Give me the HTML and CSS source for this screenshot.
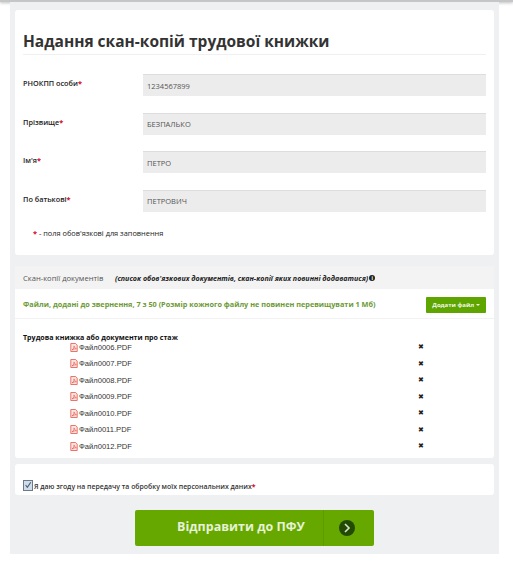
FILE: index.html
```html
<!DOCTYPE html>
<html lang="uk">
<head>
    <meta charset="UTF-8">
    <meta name="viewport" content="width=device-width, initial-scale=1.0">
    <title>Надання скан-копій трудової книжки</title>
    <link rel="stylesheet" href="styles.css">
</head>
<body>
    <div class="topbar"></div>

    <div class="wrapper">
        <!-- Personal data -->
        <div class="card">
            <h1>Надання скан-копій трудової книжки</h1>
            <div class="row">
                <label>РНОКПП особи<span class="req">*</span></label>
                <input type="text" value="1234567899" disabled>
            </div>
            <div class="row">
                <label>Прізвище<span class="req">*</span></label>
                <input type="text" value="БЕЗПАЛЬКО" disabled>
            </div>
            <div class="row">
                <label>Ім'я<span class="req">*</span></label>
                <input type="text" value="ПЕТРО" disabled>
            </div>
            <div class="row">
                <label>По батькові<span class="req">*</span></label>
                <input type="text" value="ПЕТРОВИЧ" disabled>
            </div>
            <p class="note"><span class="req">*</span> - поля обов'язкові для заповнення</p>
        </div>

        <!-- Documents -->
        <div class="docs">
            <div class="docs-head">
                <span class="docs-title">Скан-копії документів</span>
                <em class="docs-hint">(список обов'язкових документів, скан-копії яких повинні додаватися)</em>
                <span class="info">i</span>
            </div>
            <div class="docs-bar">
                <span class="docs-count">Файли, додані до звернення, 7 з 50 (Розмір кожного файлу не повинен перевищувати 1 Мб)</span>
                <button class="add-btn">Додати файл <span class="caret"></span></button>
            </div>
            <div class="docs-list">
                <div class="group-title">Трудова книжка або документи про стаж</div>
                <div class="file"><span class="file-name"><svg class="pdf" viewBox="0 0 10 11"><path d="M1 .5h6l2 2v8H1z" fill="#fbe3e0" stroke="#e2574c"/><path d="M2.500 8.500c2-1 3-3.500 2.500-5 .5 2 1.500 3 3 3.500-2 0-3.500.5-5.500 1.500z" fill="none" stroke="#e2574c" stroke-width=".8"/></svg>Файл0006.PDF</span><span class="del">✖</span></div>
                <div class="file"><span class="file-name"><svg class="pdf" viewBox="0 0 10 11"><path d="M1 .5h6l2 2v8H1z" fill="#fbe3e0" stroke="#e2574c"/><path d="M2.500 8.500c2-1 3-3.500 2.500-5 .5 2 1.500 3 3 3.500-2 0-3.500.5-5.500 1.500z" fill="none" stroke="#e2574c" stroke-width=".8"/></svg>Файл0007.PDF</span><span class="del">✖</span></div>
                <div class="file"><span class="file-name"><svg class="pdf" viewBox="0 0 10 11"><path d="M1 .5h6l2 2v8H1z" fill="#fbe3e0" stroke="#e2574c"/><path d="M2.500 8.500c2-1 3-3.500 2.500-5 .5 2 1.500 3 3 3.500-2 0-3.500.5-5.500 1.500z" fill="none" stroke="#e2574c" stroke-width=".8"/></svg>Файл0008.PDF</span><span class="del">✖</span></div>
                <div class="file"><span class="file-name"><svg class="pdf" viewBox="0 0 10 11"><path d="M1 .5h6l2 2v8H1z" fill="#fbe3e0" stroke="#e2574c"/><path d="M2.500 8.500c2-1 3-3.500 2.500-5 .5 2 1.500 3 3 3.500-2 0-3.500.5-5.500 1.500z" fill="none" stroke="#e2574c" stroke-width=".8"/></svg>Файл0009.PDF</span><span class="del">✖</span></div>
                <div class="file"><span class="file-name"><svg class="pdf" viewBox="0 0 10 11"><path d="M1 .5h6l2 2v8H1z" fill="#fbe3e0" stroke="#e2574c"/><path d="M2.500 8.500c2-1 3-3.500 2.500-5 .5 2 1.500 3 3 3.500-2 0-3.500.5-5.500 1.500z" fill="none" stroke="#e2574c" stroke-width=".8"/></svg>Файл0010.PDF</span><span class="del">✖</span></div>
                <div class="file"><span class="file-name"><svg class="pdf" viewBox="0 0 10 11"><path d="M1 .5h6l2 2v8H1z" fill="#fbe3e0" stroke="#e2574c"/><path d="M2.500 8.500c2-1 3-3.500 2.500-5 .5 2 1.500 3 3 3.500-2 0-3.500.5-5.500 1.500z" fill="none" stroke="#e2574c" stroke-width=".8"/></svg>Файл0011.PDF</span><span class="del">✖</span></div>
                <div class="file"><span class="file-name"><svg class="pdf" viewBox="0 0 10 11"><path d="M1 .5h6l2 2v8H1z" fill="#fbe3e0" stroke="#e2574c"/><path d="M2.500 8.500c2-1 3-3.500 2.500-5 .5 2 1.500 3 3 3.500-2 0-3.500.5-5.500 1.500z" fill="none" stroke="#e2574c" stroke-width=".8"/></svg>Файл0012.PDF</span><span class="del">✖</span></div>
            </div>
        </div>

        <!-- Consent -->
        <div class="consent">
            <span class="check"><svg viewBox="0 0 10 10"><path d="M2 5l2.200 3L8.500 1.500" fill="none" stroke="#4a5a6a" stroke-width="1.300"/></svg></span>
            <span>Я даю згоду на передачу та обробку моїх персональних даних<span class="req">*</span></span>
        </div>

        <div class="submit-wrap">
            <button class="submit">
                <span class="submit-text">Відправити до ПФУ</span>
                <span class="submit-side">
                    <span class="submit-arrow"><svg viewBox="0 0 16 16"><path d="M6 4l4 4-4 4" fill="none" stroke="#d5e6c5" stroke-width="1.600"/></svg></span>
                </span>
            </button>
        </div>
    </div>
</body>
</html>
```

FILE: styles.css
```css
* {
    box-sizing: border-box;
}
body {
    margin: 0;
    background: #fff;
    color: #222;
    font-family: "Open Sans", "Liberation Sans", sans-serif;
    font-size: 8px;
}
.topbar {
    height: 2px;
    background: #c4c6c8;
    box-shadow: 0 1px 3px rgba(0, 0, 0, 0.3);
}
.wrapper {
    width: 489px;
    height: 552px;
    margin-left: 10px;
    padding: 8px 5px 0;
    background: #eff0f2;
}
.req {
    color: #d0021b;
    font-weight: bold;
}

/* personal data card */
.card {
    height: 245px;
    padding: 20px 8px 0;
    background: #fff;
    border-radius: 3px;
}
h1 {
    margin: 0 0 19px;
    padding-bottom: 3px;
    height: 25px;
    border-bottom: 1px solid #f0f0f0;
    color: #333;
    font-size: 15.500px;
    font-weight: 700;
    line-height: 22px;
}
.row {
    display: flex;
    align-items: flex-start;
    height: 22px;
    margin-bottom: 16.600px;
}
.row label {
    width: 120px;
    padding-top: 3px;
    font-size: 7.300px;
    font-weight: 600;
    line-height: 12px;
}
.row input {
    width: 343px;
    height: 22px;
    padding: 0 4px;
    border: 0;
    border-top: 1px solid #ddd;
    background: #ececec;
    color: #555;
    font-family: inherit;
    font-size: 7.500px;
}
.note {
    margin: 9px 0 0 10px;
    font-size: 7.400px;
}

/* documents */
.docs {
    margin-top: 11px;
    border-radius: 3px;
}
.docs-head {
    display: flex;
    align-items: center;
    height: 23px;
    padding-left: 8px;
    background: #f3f3f3;
}
.docs-title {
    width: 92px;
    color: #555;
    font-size: 7.600px;
}
.docs-hint {
    color: #222;
    font-size: 7.100px;
    font-weight: bold;
}
.info {
    width: 6px;
    height: 6px;
    margin-left: 1px;
    border-radius: 50%;
    background: #222;
    color: #fff;
    font-size: 5px;
    font-weight: bold;
    line-height: 6px;
    text-align: center;
}
.docs-bar {
    display: flex;
    justify-content: space-between;
    align-items: center;
    height: 30px;
    padding: 0 8px;
    background: #fff;
    border-bottom: 1px solid #f2f2f2;
}
.docs-count {
    color: #6c9a36;
    font-size: 7.300px;
    font-weight: bold;
}
.add-btn {
    width: 60px;
    height: 16px;
    margin-top: 3px;
    padding: 0;
    border: 0;
    border-radius: 1px;
    background: #5ea500;
    color: #f2f7e8;
    font-family: inherit;
    font-size: 6px;
    font-weight: 700;
}
.caret {
    display: inline-block;
    border: 2px solid transparent;
    border-top-color: #f2f7e8;
    border-bottom: 0;
    vertical-align: middle;
}
.docs-list {
    height: 139px;
    padding: 13px 8px 0;
    background: #fff;
    border-radius: 0 0 3px 3px;
}
.group-title {
    height: 7px;
    color: #111;
    font-size: 7.100px;
    font-weight: 700;
    line-height: 10px;
}
.file {
    display: flex;
    align-items: center;
    height: 16.500px;
    padding-left: 47px;
    color: #333;
    font-family: "Liberation Sans", sans-serif;
    font-size: 7.600px;
}
.file-name {
    display: flex;
    align-items: center;
    width: 348px;
    gap: 1px;
}
.pdf {
    width: 8px;
    height: 9px;
}
.del {
    color: #222;
    font-family: "DejaVu Sans", sans-serif;
    font-size: 7px;
}

/* consent and submit */
.consent {
    display: flex;
    align-items: flex-end;
    gap: 1px;
    height: 31px;
    margin-top: 6px;
    padding: 0 8px 4px;
    background: #fff;
    border-radius: 3px;
    color: #333;
    font-size: 6.900px;
    font-weight: 600;
}
.check {
    width: 10px;
    height: 11px;
    border: 1px solid #6b7a8a;
    background: #cfdcec;
}
.check svg {
    display: block;
    width: 8px;
    height: 8px;
}
.submit-wrap {
    display: flex;
    justify-content: center;
    margin-top: 15px;
}
.submit {
    display: flex;
    width: 239px;
    height: 36px;
    padding: 0;
    border: 0;
    border-radius: 2px;
    background: #66a800;
    color: #e6f2d6;
    font-family: inherit;
}
.submit-text {
    flex: 1;
    padding-left: 24px;
    font-size: 12.500px;
    font-weight: 700;
    line-height: 34px;
    text-align: center;
}
.submit-side {
    display: flex;
    align-items: center;
    justify-content: center;
    width: 51px;
    height: 36px;
    padding-right: 4px;
    border-left: 1px solid #5e9a00;
}
.submit-arrow {
    width: 16px;
    height: 16px;
    border-radius: 50%;
    background: #234a05;
}
.submit-arrow svg {
    display: block;
}
```
